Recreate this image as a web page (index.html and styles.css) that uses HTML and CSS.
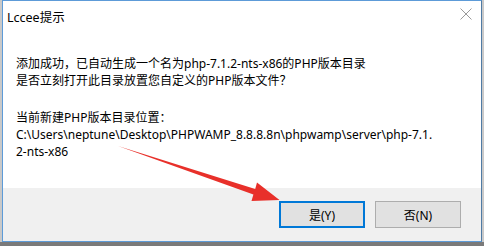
FILE: index.html
```html
<!DOCTYPE html>
<html lang="zh-cn">
<head>
    <meta charset="UTF-8">
    <title>Lccee提示</title>
    <link rel="stylesheet" href="styles.css">
</head>
<body>
    <div class="janela">
        <div class="titulo">
            <span class="titulo-texto">Lccee提示</span>
            <svg class="fechar" width="12" height="12" viewBox="0 0 12 12">
                <path d="M0.5 0.5 L11.5 11.5 M11.5 0.5 L0.5 11.5" stroke="#9a9a9a" stroke-width="1" fill="none"/>
            </svg>
        </div>
        <div class="conteudo">
            <p class="linha">添加成功，已自动生成一个名为php-7.1.2-nts-x86的PHP版本目录</p>
            <p class="linha">是否立刻打开此目录放置您自定义的PHP版本文件？</p>
            <p class="linha espaco">当前新建PHP版本目录位置：</p>
            <p class="linha">C:\Users\neptune\Desktop\PHPWAMP_8.8.8.8n\phpwamp\server\php-7.1.</p>
            <p class="linha">2-nts-x86</p>
        </div>
        <div class="rodape">
            <button class="btn btn-sim">是(Y)</button>
            <button class="btn">否(N)</button>
        </div>
        <svg class="seta" width="484" height="246" viewBox="0 0 484 246">
            <polygon fill="#e8302a" points="118,146 255.2,189 257,182.5 279.5,200 251.5,201 253.4,194.5"/>
        </svg>
    </div>
    <div class="fundo"></div>
</body>
</html>
```

FILE: styles.css
```css
body {
    margin: 0;
    padding: 0 0 0 2px;
    background-color: #c9c9c9;
    font-family: "Noto Sans", "Noto Sans CJK SC", sans-serif;
    width: 484px;
    height: 246px;
    overflow: hidden;
}

.janela {
    width: 478px;
    height: 240px;
    border: 1px solid #5d9bd8;
    border-right-color: #4f7ba5;
    background-color: #fff;
    display: flex;
    flex-direction: column;
}

.titulo {
    height: 29px;
    display: flex;
    align-items: center;
    justify-content: space-between;
    padding: 0 9px 0 4px;
}

.titulo-texto {
    font-size: 12.5px;
    color: #000;
    padding-top: 1px;
}

.fechar {
    margin-top: -4px;
}

.conteudo {
    height: 158px;
    padding: 25px 0 0 13px;
    box-sizing: border-box;
}

.linha {
    margin: 0;
    font-size: 12px;
    line-height: 17px;
    color: #000;
    white-space: nowrap;
}

.espaco {
    margin-top: 20px;
}

.rodape {
    flex: 1;
    background-color: #f0f0f0;
    display: flex;
    justify-content: flex-end;
    align-items: flex-start;
    gap: 10px;
    padding: 13px 20px 0 0;
}

.btn {
    width: 86px;
    height: 27px;
    background-color: #e1e1e1;
    border: 1px solid #adadad;
    font-family: "Noto Sans", "Noto Sans CJK SC", sans-serif;
    font-size: 12px;
    color: #000;
    padding: 0;
}

.btn-sim {
    border: 2px solid #0078d7;
}

.seta {
    position: absolute;
    left: 0;
    top: 0;
}

.fundo {
    height: 4px;
    margin-left: -2px;
    background-color: #7a7a7a;
}
```
